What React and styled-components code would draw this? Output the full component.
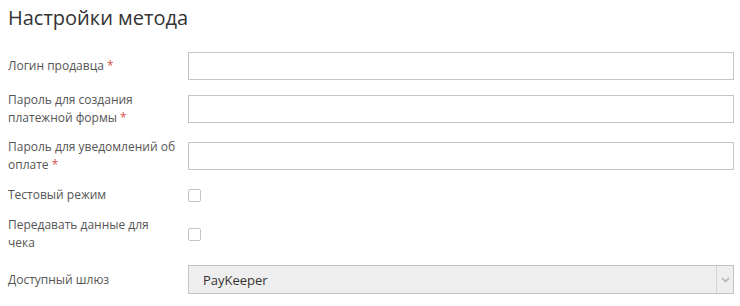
import React from 'react'
import styled, { createGlobalStyle } from 'styled-components'

const GlobalStyle = createGlobalStyle`
    body {
        margin: 0;
        background: #fff;
        font-family: "Open Sans", "Liberation Sans", sans-serif;
    }
`

const fields = [
    { label: 'Логин продавца', required: true, type: 'text' },
    { label: 'Пароль для создания платежной формы', required: true, type: 'text' },
    { label: 'Пароль для уведомлений об оплате', required: true, type: 'text' },
    { label: 'Тестовый режим', type: 'checkbox' },
    { label: 'Передавать данные для чека', type: 'checkbox' },
    { label: 'Доступный шлюз', type: 'select', value: 'PayKeeper' },
]

function Control({ field }) {
    if (field.type === 'checkbox') return <Checkbox />
    if (field.type === 'select') {
        return (
            <Select>
                <SelectValue>{field.value}</SelectValue>
                <SelectArrow>
                    <svg width="9" height="6" viewBox="0 0 9 6">
                        <path d="M1 1 L4.5 4.5 L8 1" fill="none" stroke="#b5b5b5" strokeWidth="1.6" />
                    </svg>
                </SelectArrow>
            </Select>
        )
    }
    return <Input />
}

export default function App() {
    return (
        <>
            <GlobalStyle />
            <Page>
                <Title>Настройки метода</Title>
                <Form>
                    {fields.map((f) => (
                        <Row key={f.label} $extra={f.type === 'select'}>
                            <Label>
                                {f.label}
                                {f.required && <Star> *</Star>}
                            </Label>
                            <Control field={f} />
                        </Row>
                    ))}
                </Form>
            </Page>
        </>
    )
}

const Page = styled.div`
    padding: 6px 6px 0 8px;
    width: 740px;
    box-sizing: border-box;
`
const Title = styled.h1`
    margin: 0;
    font-size: 20px;
    font-weight: 400;
    line-height: 24px;
    color: #333;
`
const Form = styled.div`
    margin-top: 22px;
    display: flex;
    flex-direction: column;
    gap: 11px;
`
const Row = styled.div`
    display: flex;
    align-items: center;
    min-height: 20px;
    margin-top: ${(p) => (p.$extra ? '2px' : '0')};
`
const Label = styled.div`
    width: 180px;
    flex-shrink: 0;
    padding-right: 10px;
    box-sizing: border-box;
    font-size: 12px;
    line-height: 18px;
    color: #555;
`
const Star = styled.span`
    color: #d9534f;
`
const Input = styled.div`
    flex: 1;
    height: 28px;
    border: 1px solid #c4c4c4;
    box-sizing: border-box;
    background: #fff;
`
const Checkbox = styled.div`
    width: 13px;
    height: 13px;
    border: 1px solid #c4c4c4;
    border-radius: 2px;
    box-sizing: border-box;
    background: #fff;
`
const Select = styled.div`
    flex: 1;
    height: 29px;
    border: 1px solid #c4c4c4;
    box-sizing: border-box;
    background: #eee;
    display: flex;
    align-items: center;
`
const SelectValue = styled.span`
    flex: 1;
    padding-left: 14px;
    font-size: 13px;
    color: #333;
`
const SelectArrow = styled.span`
    width: 16px;
    height: 100%;
    border-left: 1px solid #d4d4d4;
    display: flex;
    align-items: center;
    justify-content: center;
`
